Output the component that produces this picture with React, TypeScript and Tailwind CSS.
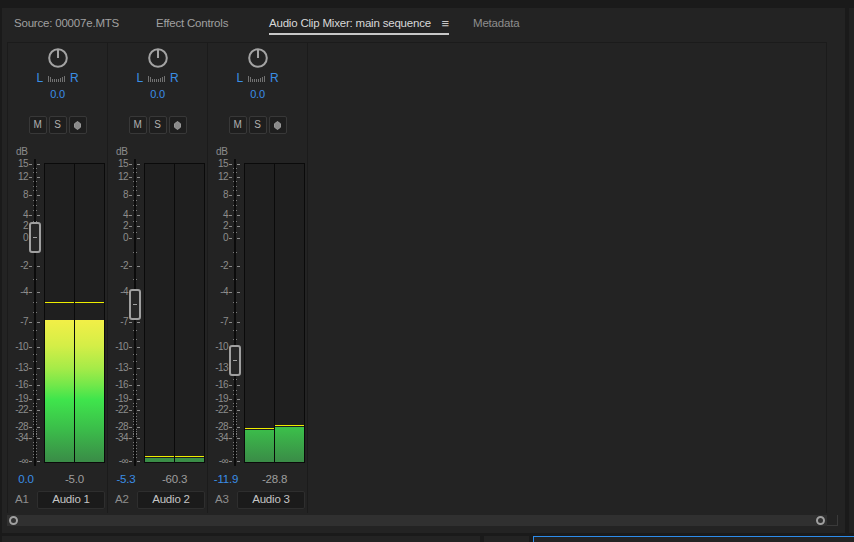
import React from "react";

const PTS: [number, number][] = [
  [15, 7], [12, 19.5], [8, 38], [4, 58], [2, 69], [0, 80.5], [-2, 109], [-4, 134.5],
  [-7, 165], [-10, 190], [-13, 211], [-16, 228], [-19, 242], [-22, 253], [-28, 270], [-34, 281],
];

function yOf(db: number): number {
  for (let i = 0; i < PTS.length - 1; i++) {
    const [a, ya] = PTS[i];
    const [b, yb] = PTS[i + 1];
    if (db <= a && db >= b) return ya + ((a - db) / (a - b)) * (yb - ya);
  }
  return 304;
}

const LABELS: [string, number][] = [...PTS.map(([v, y]) => [String(v), y] as [string, number]), ["-∞", 304]];

const DOTS: number[] = (() => {
  const out: number[] = [];
  for (let i = 0; i < PTS.length - 1; i++) {
    for (let d = PTS[i][0] - 1; d > PTS[i + 1][0]; d--) out.push(Math.round(yOf(d)));
  }
  out.push(285, 288, 291, 294, 297, 300);
  return out;
})();

type Ch = { fill: number; peak: number };

function Meter({ fill, peak }: Ch) {
  return (
    <div className="relative flex-1 overflow-hidden">
      <div className="absolute inset-x-0 h-px bg-[#eded00]" style={{ bottom: peak }} />
      <div className="absolute inset-x-0 bottom-0 overflow-hidden" style={{ height: fill }}>
        <div className="absolute inset-x-0 bottom-0 h-[298px] bg-[linear-gradient(to_bottom,#f4f048_0%,#f3ef47_52%,#d4ee47_61%,#a6eb48_68.5%,#74e84a_74%,#3fe54c_79%,#3bbd4a_89%,#3a8b47_100%)]" />
      </div>
    </div>
  );
}

function Fader({ value, left, right }: { value: number; left: Ch; right: Ch }) {
  const hy = Math.round(yOf(value) - 15.5);
  return (
    <div className="flex h-[310px]">
      <div className="relative h-full w-[36px] shrink-0">
        <div className="absolute left-[26px] top-[2px] h-[307px] w-[2px] bg-[#0b0b0b]" />
        {DOTS.map((y, i) => (
          <React.Fragment key={"d" + i}>
            <div className="absolute left-[25px] h-px w-px bg-[#7a7a7a]" style={{ top: y }} />
            <div className="absolute left-[28px] h-px w-px bg-[#7a7a7a]" style={{ top: y }} />
          </React.Fragment>
        ))}
        {LABELS.map(([t, y]) => (
          <React.Fragment key={t}>
            <span
              className="absolute left-0 w-[20px] text-right text-[10px] leading-[10px] tracking-[-0.6px] text-[#8c8c8c]"
              style={{ top: Math.round(y - 5) }}
            >
              {t}
            </span>
            <div className="absolute left-[21px] h-px w-[3px] bg-[#8a8a8a]" style={{ top: Math.round(y) }} />
            <div className="absolute left-[29px] h-px w-[3px] bg-[#8a8a8a]" style={{ top: Math.round(y) }} />
          </React.Fragment>
        ))}
        <div
          className="absolute left-[21px] flex h-[31px] w-[12px] items-center justify-center rounded-[3px] border-2 border-[#a0a0a0] bg-[#262626]"
          style={{ top: hy }}
        >
          <div className="h-px w-[4px] bg-[#a0a0a0]" />
        </div>
      </div>
      <div className="mt-[6px] flex h-[300px] w-[61px] border border-[#0a0a0a] bg-[#1f1f1f]">
        <Meter {...left} />
        <div className="w-px bg-[#0a0a0a]" />
        <Meter {...right} />
      </div>
    </div>
  );
}

function Knob() {
  return (
    <svg width="22" height="22" viewBox="0 0 22 22">
      <circle cx="11" cy="11" r="8.8" fill="none" stroke="#a3a3a3" strokeWidth="2" />
      <line x1="11" y1="2" x2="11" y2="11" stroke="#a3a3a3" strokeWidth="2" />
    </svg>
  );
}

function PanMeter() {
  const h = [6, 5, 3, 3, 3, 3, 4, 5, 6];
  return (
    <svg width="17" height="7" viewBox="0 0 17 7">
      {h.map((v, i) => (
        <rect key={i} x={i * 2} y={7 - v} width="1" height={v} fill="#727272" />
      ))}
    </svg>
  );
}

function Btn({ children }: { children: React.ReactNode }) {
  return (
    <div className="flex h-[18px] w-[18px] items-center justify-center rounded-[2px] border border-[#383838] bg-[#1e1e1e] text-[10px] leading-none text-[#b0b0b0]">
      {children}
    </div>
  );
}

function Strip({
  id, name, vol, peakVal, left, right,
}: { id: string; name: string; vol: number; peakVal: string; left: Ch; right: Ch }) {
  return (
    <div className="flex h-full w-[100px] shrink-0 flex-col border-r border-[#1b1b1b]">
      <div className="mt-[4px] flex justify-center">
        <Knob />
      </div>
      <div className="mt-[3px] flex h-[12px] items-center justify-center gap-[5px] text-[12px] leading-[12px] text-[#3a8ee6]">
        <span>L</span>
        <PanMeter />
        <span>R</span>
      </div>
      <div className="mt-[4px] h-[12px] text-center text-[11px] leading-[12px] text-[#3a8ee6]">0.0</div>
      <div className="mt-[16px] flex justify-center gap-[2px]">
        <Btn>M</Btn>
        <Btn>S</Btn>
        <Btn>
          <svg width="7" height="9" viewBox="0 0 7 9">
            <polygon points="3.5,0.5 6.5,2.7 6.5,6.3 3.5,8.5 0.5,6.3 0.5,2.7" fill="#8a8a8a" stroke="#a8a8a8" strokeWidth="0.8" />
          </svg>
        </Btn>
      </div>
      <div className="mt-[13px] h-[10px] pl-[8px] text-[10px] leading-[10px] text-[#8c8c8c]">dB</div>
      <Fader value={vol} left={left} right={right} />
      <div className="mt-[6px] flex h-[12px] text-[11.5px] leading-[12px]">
        <div className="w-[36px] text-center text-[#3a8ee6]">{vol.toFixed(1)}</div>
        <div className="w-[61px] text-center text-[#9e9e9e]">{peakVal}</div>
      </div>
      <div className="mt-[6px] flex h-[18px] items-center">
        <div className="w-[29px] pl-[7px] text-[11.5px] text-[#8e8e8e]">{id}</div>
        <div className="flex h-[18px] w-[68px] items-center justify-center rounded-[2px] border border-[#2e2e2e] bg-[#1b1b1b] text-[11.5px] text-[#c4c4c4]">
          {name}
        </div>
      </div>
    </div>
  );
}

function Ring() {
  return <div className="h-[9px] w-[9px] rounded-full border-2 border-[#a0a0a0]" />;
}

export default function App() {
  return (
    <div className="flex h-[542px] w-[854px] flex-col overflow-hidden bg-[#1a1a1a] font-['Liberation_Sans',Arial,sans-serif] tracking-[-0.2px]">
      <div className="h-[8px] shrink-0" />
      <div className="flex h-[525px] shrink-0">
        <div className="ml-[2px] flex w-[843px] flex-col bg-[#232323]">
          {/* tabs */}
          <div className="flex h-[27px] text-[11.5px] leading-[13px]">
            <div className="ml-[12px] w-[142px] border-b-2 border-transparent pt-[9px] pb-[3px] text-[#a0a0a0]">Source: 00007e.MTS</div>
            <div className="w-[113px] border-b-2 border-transparent pt-[9px] pb-[3px] text-[#a0a0a0]">Effect Controls</div>
            <div className="flex w-[180px] items-start border-b-2 border-[#c8c8c8] pt-[9px] pb-[3px] text-[#d8d8d8]">
              <span>Audio Clip Mixer: main sequence</span>
              <span className="ml-auto text-[13px] leading-[13px] text-[#c8c8c8]">≡</span>
            </div>
            <div className="ml-[24px] border-b-2 border-transparent pt-[9px] pb-[3px] text-[#8e8e8e]">Metadata</div>
          </div>
          {/* mixer area */}
          <div className="ml-[5px] mt-[7px] flex h-[471px] w-[820px] border-x border-t border-[#1b1b1b]">
            <Strip id="A1" name="Audio 1" vol={0} peakVal="-5.0" left={{ fill: 142, peak: 159 }} right={{ fill: 142, peak: 159 }} />
            <Strip id="A2" name="Audio 2" vol={-5.3} peakVal="-60.3" left={{ fill: 4, peak: 5 }} right={{ fill: 4, peak: 5 }} />
            <Strip id="A3" name="Audio 3" vol={-11.9} peakVal="-28.8" left={{ fill: 32, peak: 33 }} right={{ fill: 35, peak: 36 }} />
          </div>
          {/* scrollbar */}
          <div className="ml-[5px] mt-[2px] flex h-[11px]">
            <div className="flex h-[11px] w-[820px] items-center justify-between bg-[#303030] px-[2px]">
              <Ring />
              <Ring />
            </div>
            <div className="h-[11px] w-[11px] border-b border-r border-[#3a3a3a]" />
          </div>
        </div>
        <div className="ml-[4px] flex-1 bg-[#212121]" />
      </div>
      <div className="h-[3px] shrink-0" />
      <div className="flex flex-1">
        <div className="ml-[2px] w-[478px] bg-[#232323]" />
        <div className="ml-[4px] w-[45px] bg-[#232323]" />
        <div className="ml-[4px] flex-1 border-l border-t border-[#2d8ceb] bg-[#232323]" />
      </div>
    </div>
  );
}
